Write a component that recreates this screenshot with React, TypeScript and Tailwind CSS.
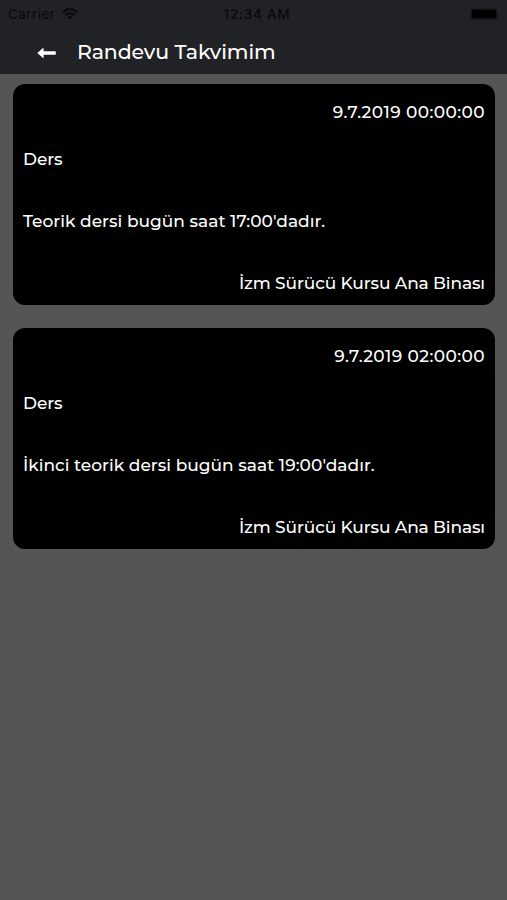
interface Randevu {
  tarih: string;
  baslik: string;
  aciklama: string;
  yer: string;
}

const randevular: Randevu[] = [
  {
    tarih: '9.7.2019 00:00:00',
    baslik: 'Ders',
    aciklama: "Teorik dersi bugün saat 17:00'dadır.",
    yer: 'İzm Sürücü Kursu Ana Binası'
  },
  {
    tarih: '9.7.2019 02:00:00',
    baslik: 'Ders',
    aciklama: "İkinci teorik dersi bugün saat 19:00'dadır.",
    yer: 'İzm Sürücü Kursu Ana Binası'
  }
];

function StatusBar() {
  return (
    <div className="grid h-7 grid-cols-3 items-center pl-2 pr-[6px] font-['Inter',sans-serif] text-[13.5px] text-[#08090a]">
      <div className="flex items-center gap-[7px]">
        <span className="tracking-[0.45px]">Carrier</span>
        <svg className="h-3 w-4" viewBox="0 0 16 12" fill="none" stroke="currentColor" strokeWidth="2">
          <path d="M0.8 4.4C5 0.2 11 0.2 15.2 4.4" />
          <path d="M3.5 7.2C6 4.7 10 4.7 12.5 7.2" />
          <path d="M5.7 9.2C7 8 9 8 10.3 9.2L8 11.6Z" fill="currentColor" stroke="none" />
        </svg>
      </div>
      <span className="whitespace-nowrap pl-[5px] text-center font-medium tracking-[0.75px]">12:34 AM</span>
      <svg className="h-3 w-[31px] justify-self-end" viewBox="0 0 31 12">
        <rect x="0.5" y="0.5" width="27" height="11" rx="2.5" fill="none" stroke="#1a1b1e" />
        <rect x="1.500" y="1.500" width="25" height="9" rx="1.5" fill="#000" />
        <path d="M29 4v4c1-.4 1.5-1.1 1.5-2S30 4.400 29 4z" fill="#1a1b1e" />
      </svg>
    </div>
  );
}

function RandevuCard({ randevu }: { randevu: Randevu }) {
  return (
    <div className="flex h-[221px] flex-col rounded-xl bg-black px-[10px] pt-4 text-[17px] font-medium leading-6 text-white">
      <p className="text-right tracking-[0.4px]">{randevu.tarih}</p>
      <p className="mt-[23px] tracking-[-0.1px]">{randevu.baslik}</p>
      <p className="mt-[38px] tracking-[0.02px]">{randevu.aciklama}</p>
      <p className="mt-[38px] text-right tracking-[-0.12px]">{randevu.yer}</p>
    </div>
  );
}

export default function App() {
  return (
    <div className="min-h-screen bg-[#555555] font-['Montserrat','Inter',sans-serif]">
      {/* Header */}
      <header className="h-[74px] bg-[#212226]">
        <StatusBar />
        <div className="flex h-[46px] items-center pl-[37px]">
          <svg className="mt-[3px] h-3 w-[19px]" viewBox="0 0 19 12" fill="#fff">
            <path d="M0.3 6L6 1Q6.600 0.700 6.600 1.500V4.300H18.200Q18.800 4.300 18.800 5V7Q18.800 7.700 18.200 7.700H6.600V10.500Q6.600 11.300 6 11Z" />
          </svg>
          <h1 className="ml-[21px] mt-[2px] text-[20.5px] font-medium leading-6 tracking-[-0.1px] text-white">Randevu Takvimim</h1>
        </div>
      </header>

      {/* Appointment list */}
      <main className="flex flex-col gap-[23px] pl-[13px] pr-3 pt-[10px]">
        {randevular.map((randevu) => (
          <RandevuCard key={randevu.tarih} randevu={randevu} />
        ))}
      </main>
    </div>
  );
}
